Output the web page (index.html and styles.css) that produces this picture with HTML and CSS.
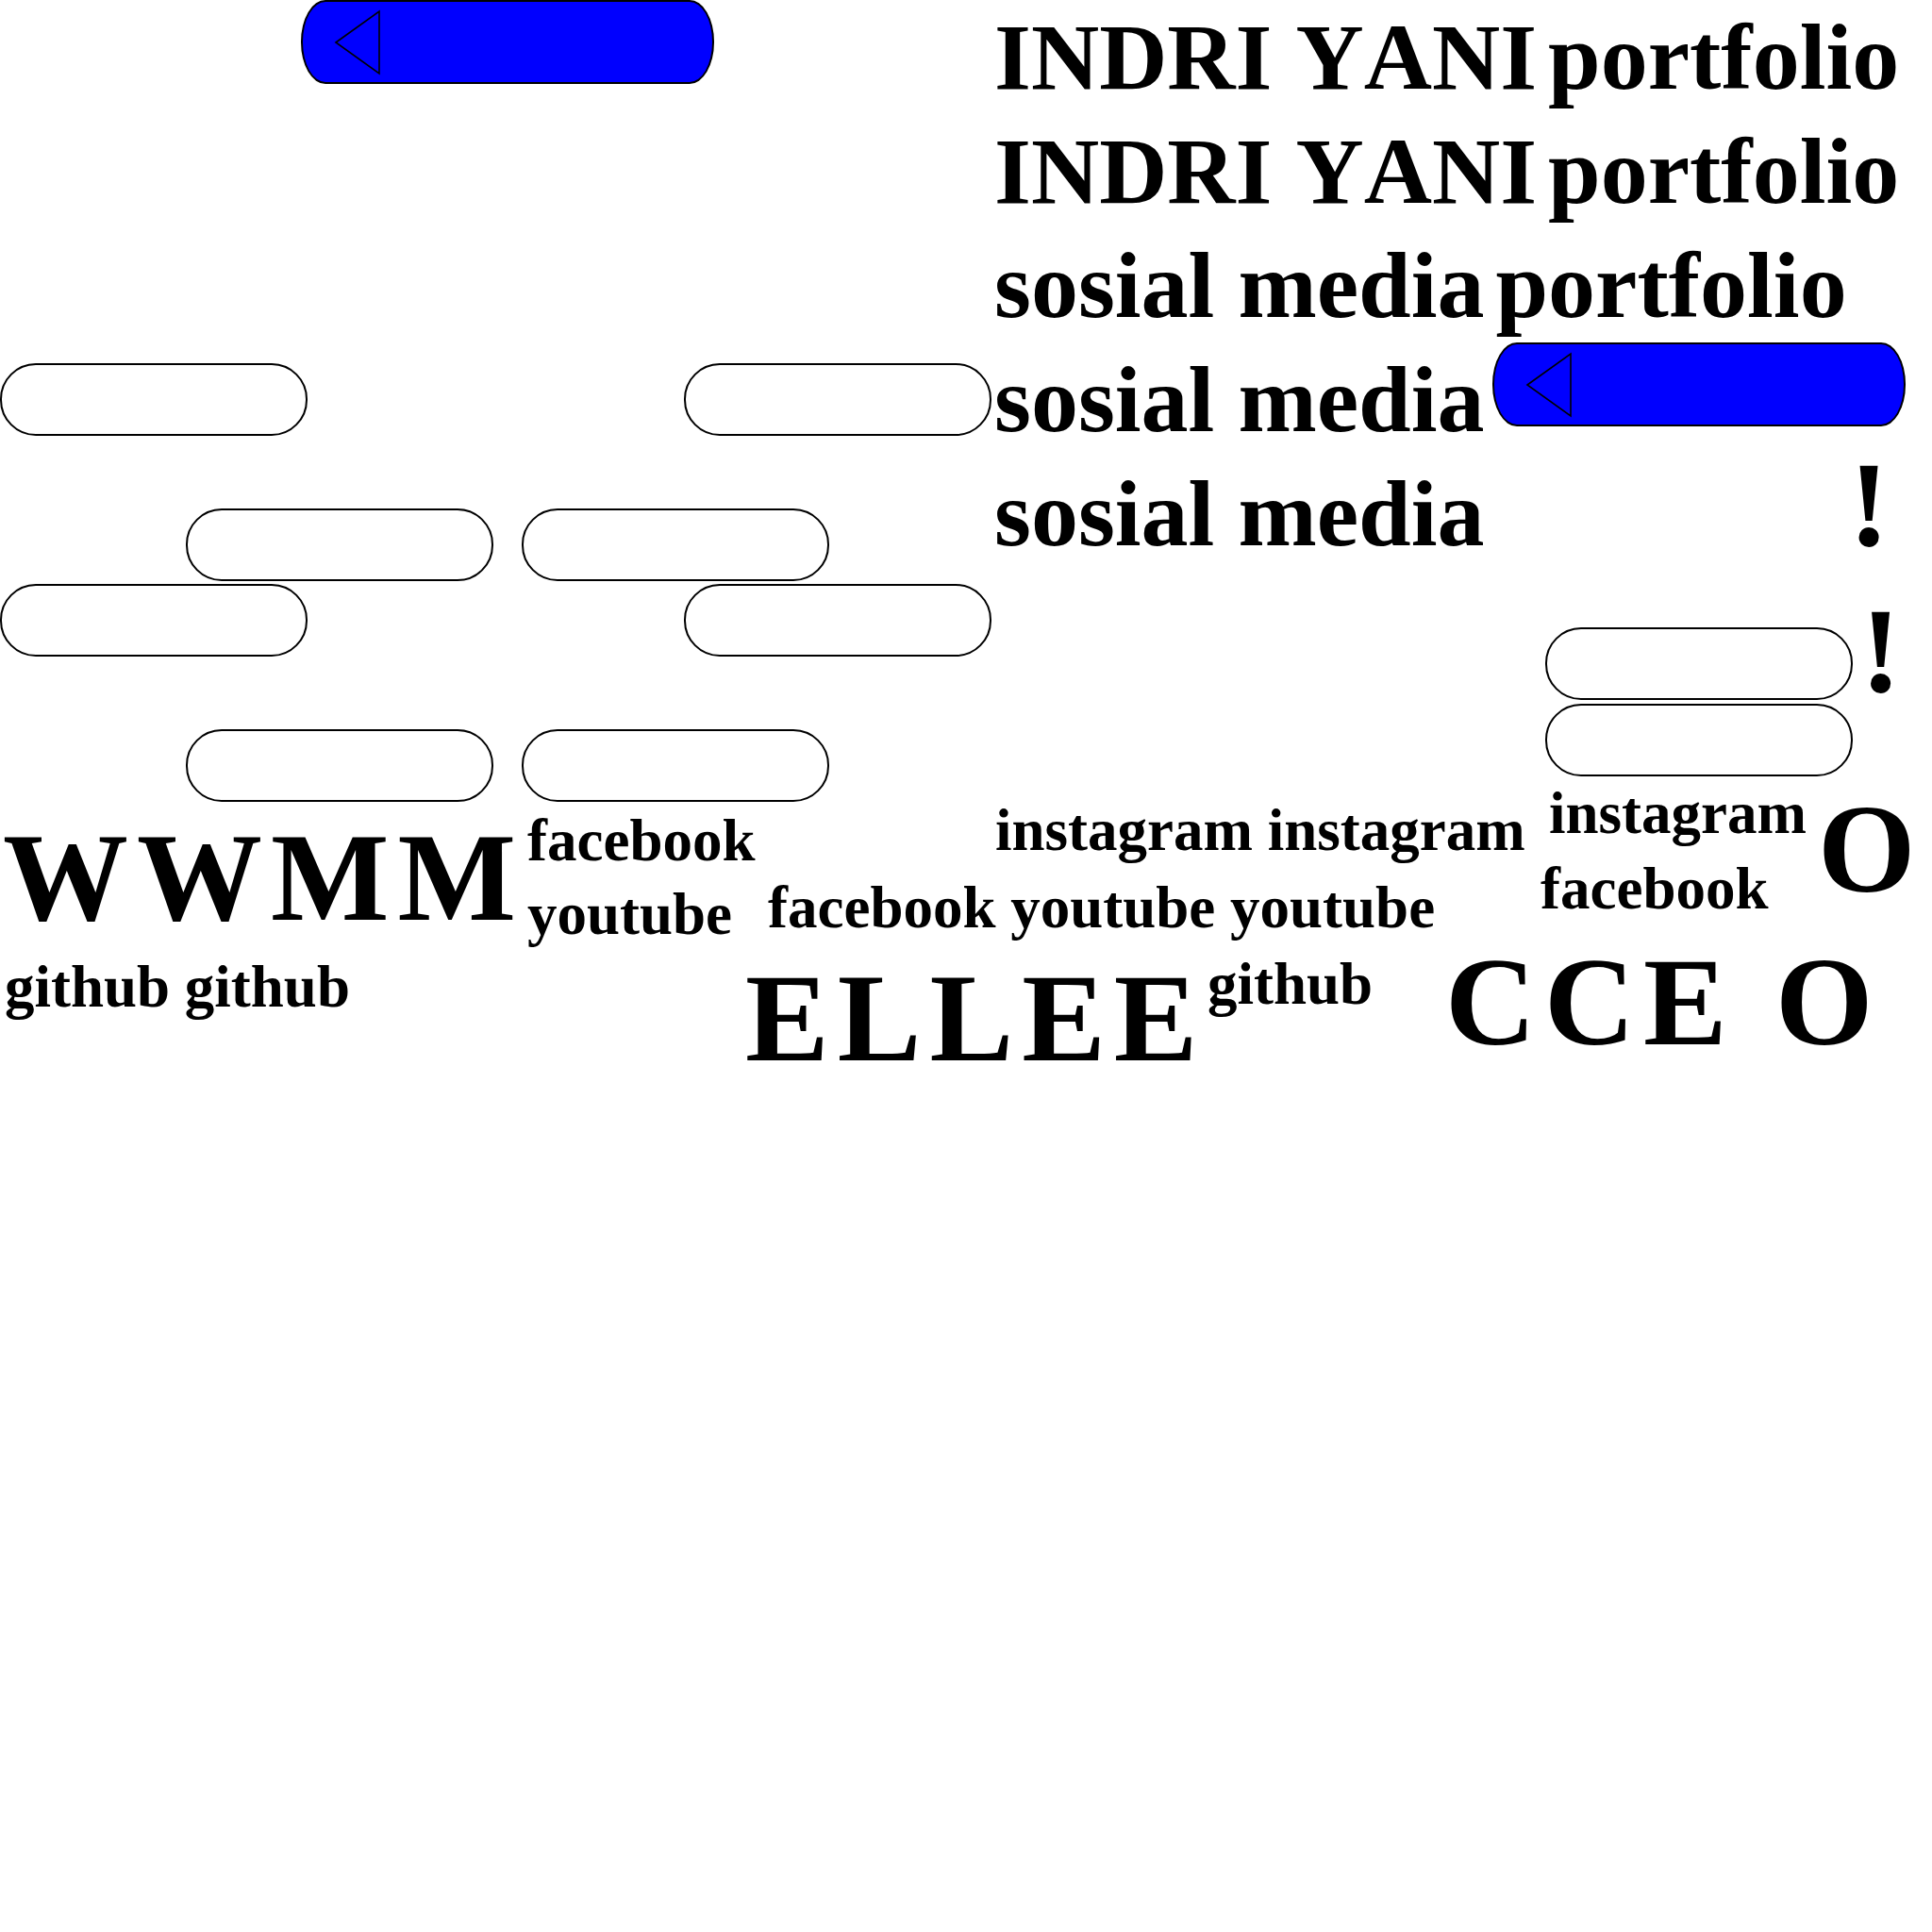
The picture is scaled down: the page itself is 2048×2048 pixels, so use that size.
FILE: index.html
```html
<!DOCTYPE html>
<html lang="id">
<head>
<meta charset="utf-8">
<title>INDRI YANI portfolio</title>
<link rel="stylesheet" href="styles.css">
</head>
<body>
<div class="canvas">

  <div class="blue-pill pill-top">
    <svg class="tri" width="48" height="68" viewBox="0 0 48 68"><polygon points="1,34 47,1 47,67"/></svg>
  </div>

  <div class="rows">
    <div class="row"><span>INDRI YANI</span><span>portfolio</span></div>
    <div class="row"><span>INDRI YANI</span><span>portfolio</span></div>
    <div class="row"><span>sosial media</span><span>portfolio</span></div>
    <div class="row row-pill"><span>sosial media</span>
      <div class="blue-pill pill-row">
        <svg class="tri" width="48" height="68" viewBox="0 0 48 68"><polygon points="1,34 47,1 47,67"/></svg>
      </div>
    </div>
    <div class="row row-bang"><span>sosial media</span><span class="bang">!</span></div>
  </div>

  <span class="bang bang-2">!</span>

  <div class="pill p-a"></div>
  <div class="pill p-b"></div>
  <div class="pill p-c"></div>
  <div class="pill p-d"></div>
  <div class="pill p-e"></div>
  <div class="pill p-f"></div>
  <div class="pill p-g"></div>
  <div class="pill p-h"></div>
  <div class="pill p-i"></div>
  <div class="pill p-j"></div>

  <div class="big t-wwmm">WWMM</div>
  <div class="big t-ellee">ELLEE</div>
  <div class="big t-cceo">CCE O</div>
  <div class="big t-o">O</div>

  <div class="small stack"><div>facebook</div><div>youtube</div></div>
  <div class="small t-fyy">facebook youtube youtube</div>
  <div class="small t-ii">instagram instagram</div>
  <div class="small t-ig">instagram</div>
  <div class="small t-fb">facebook</div>
  <div class="small t-gg">github github</div>
  <div class="small t-gh">github</div>

</div>
</body>
</html>
```

FILE: styles.css
```css
html, body {
  margin: 0;
  padding: 0;
  background: #ffffff;
}

body {
  font-family: "Liberation Serif", "Times New Roman", serif;
  font-weight: bold;
  font-kerning: none;
  color: #000000;
}

.canvas {
  position: relative;
  width: 2048px;
  height: 2048px;
  overflow: hidden;
}

/* blue pills with triangle */
.blue-pill {
  box-sizing: border-box;
  width: 438px;
  height: 89px;
  background: #0000ff;
  border: 2px solid #000000;
  border-radius: 26px / 44px;
  display: flex;
  align-items: center;
  padding-left: 34px;
}

.tri {
  display: block;
  overflow: visible;
}

.tri polygon {
  fill: none;
  stroke: #000000;
  stroke-width: 1.6;
  stroke-linejoin: miter;
}

.pill-top {
  position: absolute;
  left: 319px;
  top: 0;
}

/* top right text rows */
.rows {
  position: absolute;
  left: 1054px;
  top: 0;
  display: flex;
  flex-direction: column;
  font-size: 100px;
  line-height: 121px;
  white-space: nowrap;
}

.row {
  display: flex;
  align-items: flex-start;
  gap: 12px;
}

.row-pill {
  gap: 9px;
}

.row-bang {
  gap: 386px;
}

.bang {
  font-size: 130px;
  line-height: 121px;
}

.row-bang .bang {
  margin-top: -10px;
}

.bang-2 {
  position: absolute;
  left: 1972px;
  top: 624px;
  line-height: 1;
}

/* outline pills */
.pill {
  position: absolute;
  box-sizing: border-box;
  width: 326px;
  height: 77px;
  border: 2px solid #000000;
  border-radius: 38px;
  background: #ffffff;
}

.p-a { left: 0;      top: 385px; }
.p-b { left: 725px;  top: 385px; }
.p-c { left: 197px;  top: 539px; }
.p-d { left: 553px;  top: 539px; }
.p-e { left: 0;      top: 619px; }
.p-f { left: 725px;  top: 619px; }
.p-g { left: 197px;  top: 773px; }
.p-h { left: 553px;  top: 773px; }
.p-i { left: 1638px; top: 665px; }
.p-j { left: 1638px; top: 746px; }

/* large spaced letters */
.big {
  position: absolute;
  font-size: 133px;
  line-height: 1;
  letter-spacing: 9px;
  white-space: nowrap;
}

.t-wwmm  { left: 3px;    top: 864px; }
.t-ellee { left: 790px;  top: 1013px; }
.t-cceo  { left: 1532px; top: 996px; }
.t-o     { left: 1927px; top: 834px; letter-spacing: 0; }

/* small labels */
.small {
  position: absolute;
  font-size: 63px;
  line-height: 1;
  white-space: nowrap;
}

.stack {
  left: 559px;
  top: 852px;
  line-height: 78px;
}

.t-fyy { left: 814px;  top: 931px; }
.t-ii  { left: 1055px; top: 849px; }
.t-ig  { left: 1642px; top: 831px; }
.t-fb  { left: 1633px; top: 911px; }
.t-gg  { left: 5px;    top: 1015px; }
.t-gh  { left: 1280px; top: 1012px; }
```
